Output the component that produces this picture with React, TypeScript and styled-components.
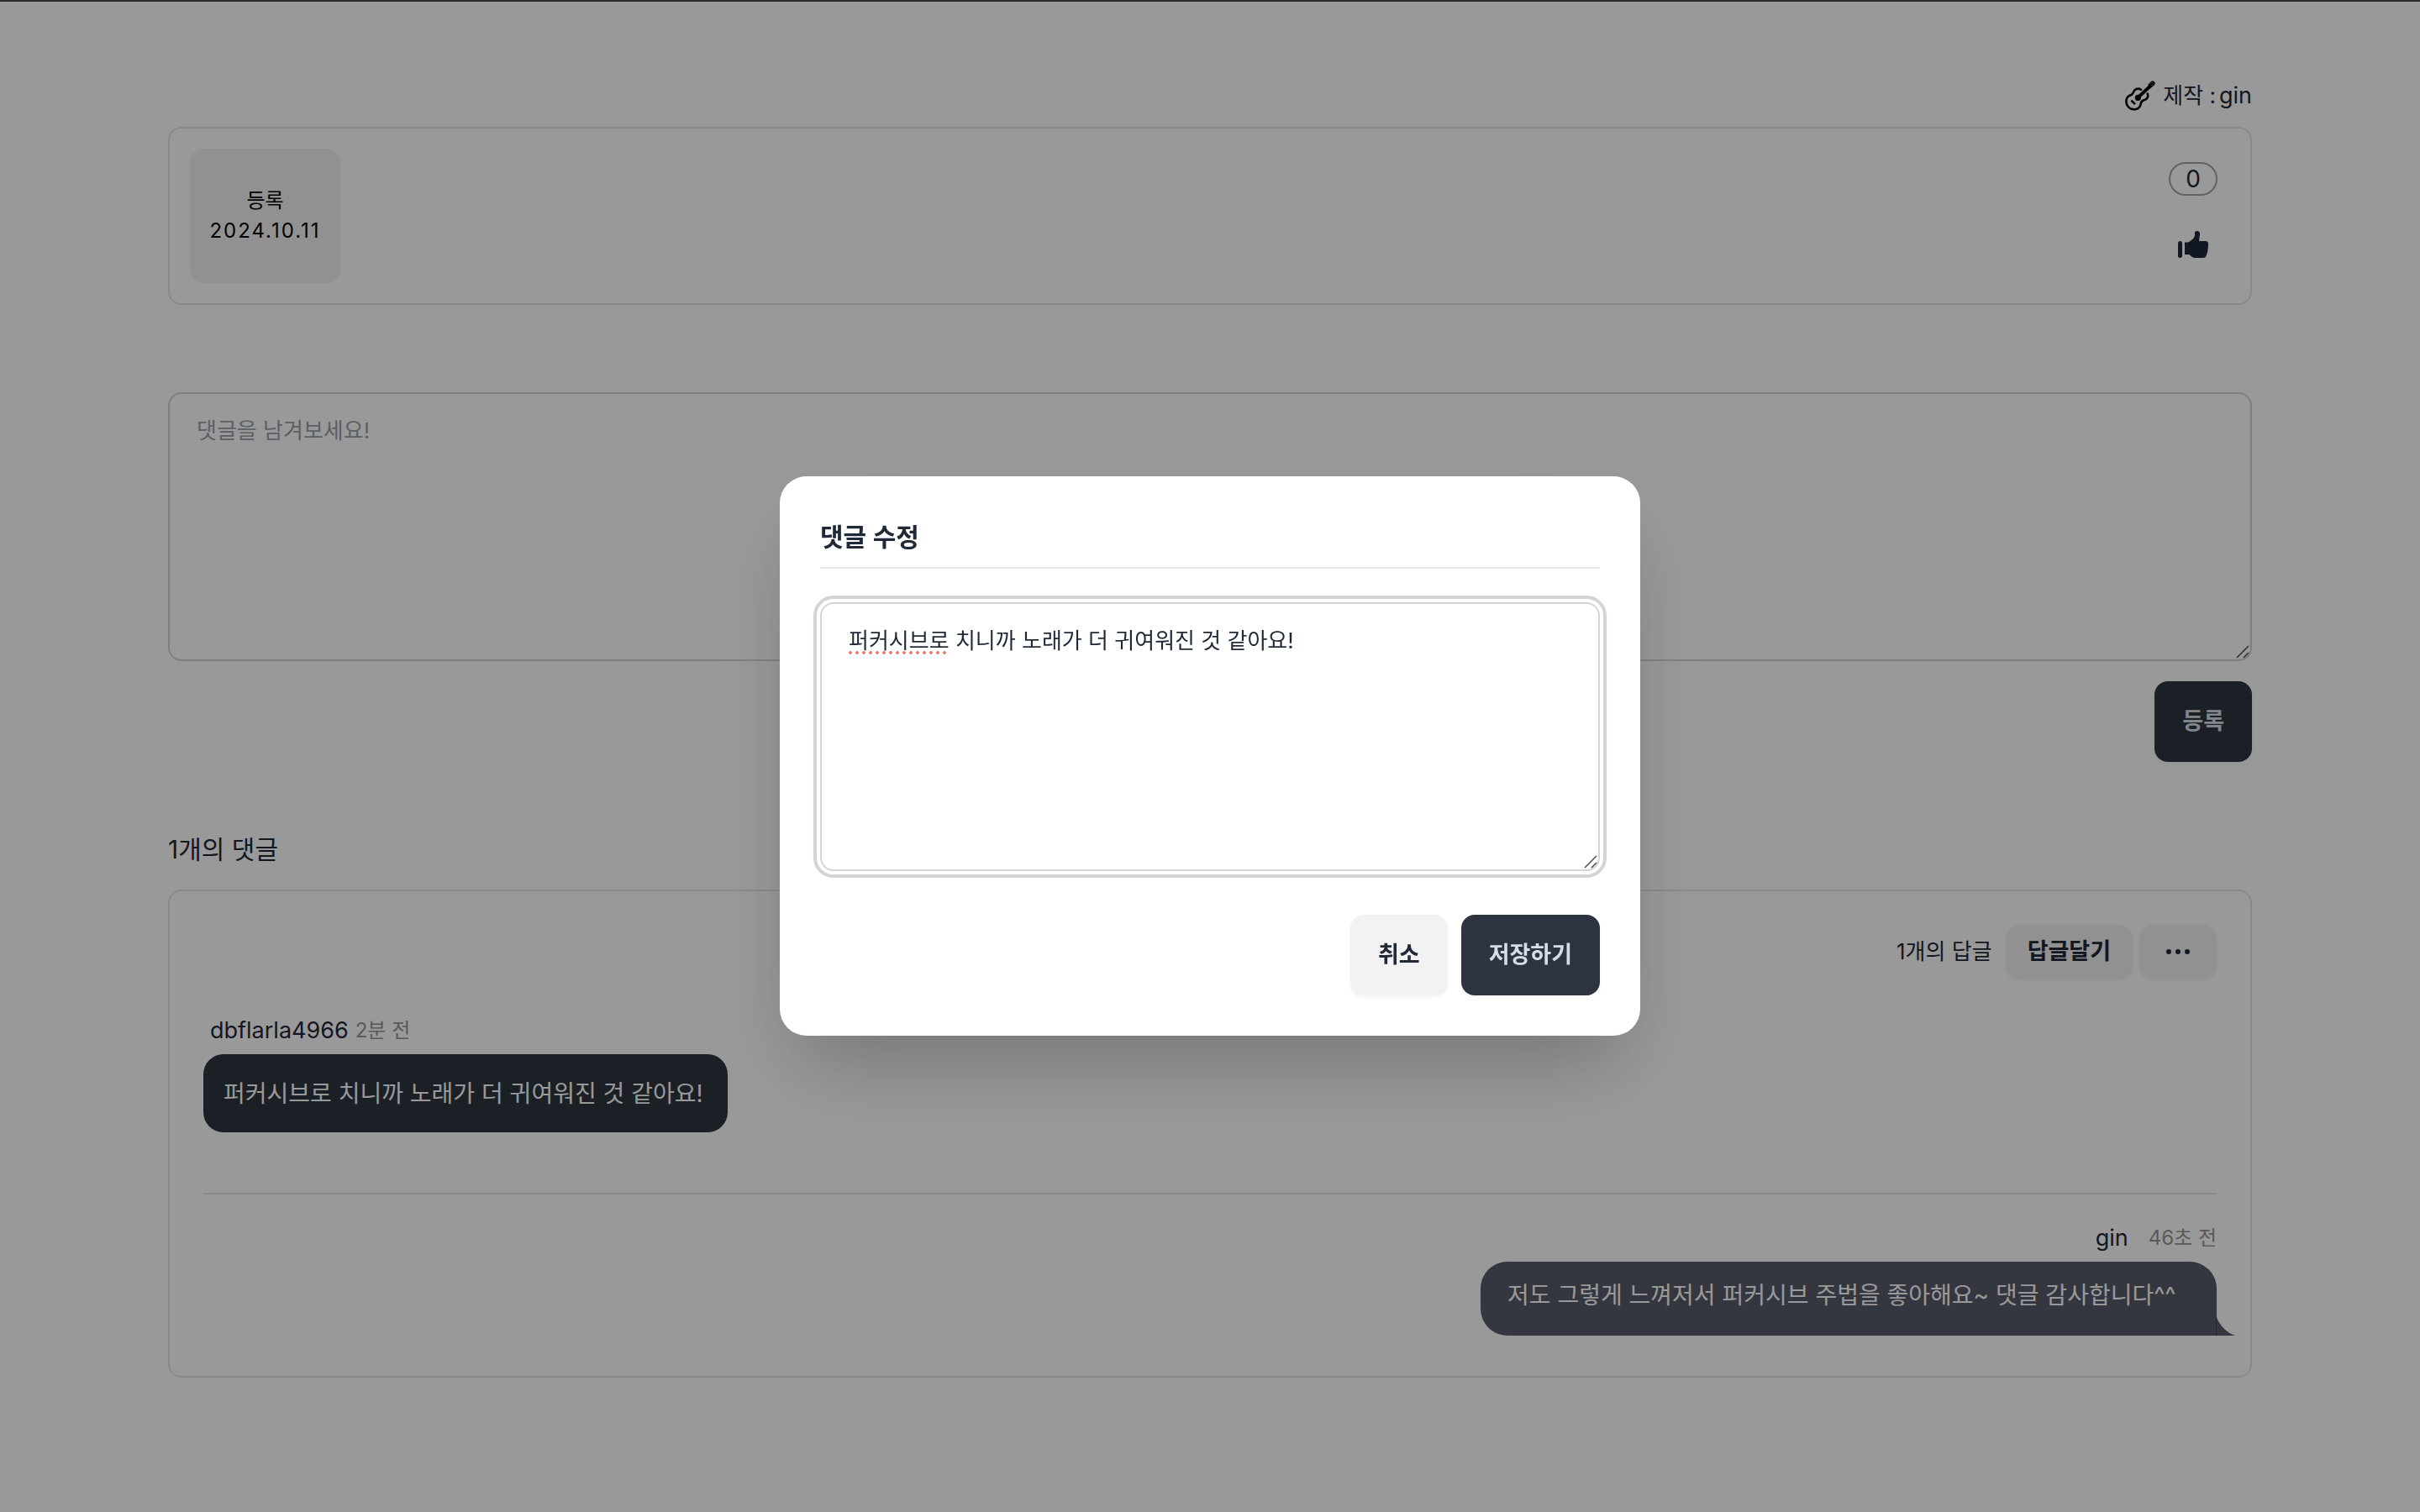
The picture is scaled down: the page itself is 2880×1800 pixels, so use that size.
import React from 'react';
import styled, { createGlobalStyle, css } from 'styled-components';

const ink = '#1f2937';
const neutral = '#2d3440';
const line = '#e5e5e5';
const fieldLine = '#d2d4d7';
const soft = '#f2f2f2';

const GlobalStyle = createGlobalStyle`
  *, *::before, *::after { box-sizing: border-box; }
  body {
    margin: 0;
    background: #fff;
    color: ${ink};
    font: 400 26px/40px Inter, "Noto Sans CJK KR", sans-serif;
  }
  h1, h2, p { margin: 0; font-weight: inherit; }
  button, textarea { font: inherit; color: inherit; }
`;

const Page = styled.main`
  display: flex;
  flex-direction: column;
  padding: 0 200px 160px;
  min-height: 100vh;
  border-top: 2px solid #444;
`;

const Maker = styled.div`
  display: flex;
  justify-content: flex-end;
  align-items: center;
  gap: 4px;
  padding: 92px 0 17px;
`;

const GuitarIcon = styled.svg`
  margin-right: 5px;
`;

const Name = styled.span`
  font-size: 27px;
`;

const Card = styled.section`
  display: flex;
  border: 2px solid ${line};
  border-radius: 16px;
`;

const SummaryCard = styled(Card)`
  justify-content: space-between;
  padding: 24px;
`;

const DateBox = styled.div`
  display: flex;
  flex-direction: column;
  justify-content: center;
  align-items: center;
  min-width: 179px;
  height: 160px;
  border-radius: 16px;
  background: ${soft};
  color: #000;
  font-size: 24px;
  line-height: 36px;
`;

const DateText = styled.time`
  letter-spacing: 2px;
`;

const Likes = styled.div`
  display: flex;
  flex-direction: column;
  align-items: center;
  gap: 42px;
  padding: 16px 15px;
`;

const LikeCount = styled.span`
  width: 58px;
  height: 40px;
  border: 2px solid #a6a6a6;
  border-radius: 20px;
  font-size: 28px;
  line-height: 36px;
  text-align: center;
`;

const IconButton = styled.button`
  display: flex;
  padding: 0;
  border: 0;
  background: none;
`;

const Form = styled.form`
  display: flex;
  flex-direction: column;
  align-items: flex-end;
  gap: 24px;
  margin-top: 104px;
`;

const FieldWrap = styled.div`
  position: relative;
  display: flex;
  width: 100%;
`;

const TextArea = styled.textarea<{ $focused?: boolean }>`
  flex: 1;
  height: 320px;
  padding: 16px 32px;
  border: 2px solid ${fieldLine};
  border-radius: 16px;
  background: #fff;
  line-height: 56px;
  resize: none;
  outline: ${({ $focused }) => ($focused ? `4px solid ${fieldLine}` : 'none')};
  outline-offset: 4px;
  &::placeholder { color: #9ca0ab; opacity: 1; }
`;

const Grip = styled.svg`
  position: absolute;
  right: 3px;
  bottom: 3px;
`;

const Misspelling = styled.span`
  position: absolute;
  left: 34px;
  top: 58px;
  width: 120px;
  height: 4px;
  background: radial-gradient(circle at 2px 2px, #f27d72 2px, transparent 2px) 0 0 / 8px 4px;
`;

const Button = styled.button<{ $dark?: boolean; $small?: boolean }>`
  display: flex;
  justify-content: center;
  align-items: center;
  height: 96px;
  padding: 0 33px;
  border: 0;
  border-radius: 16px;
  background: ${({ $dark }) => ($dark ? neutral : soft)};
  color: ${({ $dark }) => ($dark ? '#d7dde4' : ink)};
  font-size: 27px;
  font-weight: 600;
  box-shadow: 0 2px 4px rgba(0, 0, 0, 0.05);
  ${({ $small }) => $small && css`
    height: 64px;
    padding: 0 26px;
  `}
`;

const Heading = styled.h1`
  margin-top: 80px;
  font-size: 30px;
  line-height: 48px;
`;

const Thread = styled(Card)`
  flex-direction: column;
  margin-top: 24px;
  padding: 40px 40px 48px;
`;

const Toolbar = styled.div`
  display: flex;
  justify-content: flex-end;
  align-items: center;
  gap: 8px;
`;

const ReplyCount = styled.span`
  margin-right: 8px;
`;

const Author = styled.div<{ $mine?: boolean }>`
  display: flex;
  align-items: center;
  justify-content: ${({ $mine }) => ($mine ? 'flex-end' : 'flex-start')};
  gap: ${({ $mine }) => ($mine ? 24 : 8)}px;
  margin-top: ${({ $mine }) => ($mine ? 32 : 42)}px;
  padding-left: 8px;
`;

const Time = styled.time`
  color: #969696;
  font-size: 24px;
`;

const Bubble = styled.p`
  align-self: flex-start;
  min-width: 624px;
  margin-top: 8px;
  padding: 25px 24px 23px;
  border-radius: 24px;
  background: ${neutral};
  color: #fff;
  font-size: 28px;
  line-height: 45px;
`;

const Divider = styled.hr`
  width: 100%;
  height: 2px;
  margin: 72px 0 0;
  border: 0;
  background: ${line};
`;

const ReplyBubble = styled.p`
  position: relative;
  align-self: flex-end;
  min-width: 876px;
  min-height: 88px;
  margin-top: 8px;
  padding: 16px 32px;
  border-radius: 32px 32px 0 32px;
  background: #585c69;
  color: #fff;
  font-size: 28px;
  line-height: 48px;
`;

const Tail = styled.svg`
  position: absolute;
  left: calc(100% - 1px);
  bottom: 0;
`;

const Backdrop = styled.div`
  position: fixed;
  inset: 0;
  display: grid;
  place-items: center;
  background: rgba(0, 0, 0, 0.4);
`;

const Modal = styled.form`
  display: flex;
  flex-direction: column;
  width: 1024px;
  max-width: 90vw;
  padding: 48px;
  border-radius: 32px;
  background: #fff;
  box-shadow: 0 50px 100px -24px rgba(0, 0, 0, 0.25);
`;

const ModalTitle = styled.h2`
  margin-bottom: 40px;
  padding-bottom: 12px;
  border-bottom: 2px solid #e5e6e9;
  font-size: 30px;
  font-weight: 600;
  line-height: 48px;
`;

const Actions = styled.div`
  display: flex;
  justify-content: flex-end;
  gap: 16px;
  margin-top: 52px;
`;

function Field(props: React.ComponentProps<typeof TextArea> & { children?: React.ReactNode }) {
  const { children, ...rest } = props;
  return (
    <FieldWrap>
      <TextArea spellCheck={false} {...rest} />
      {children}
      <Grip width="16" height="16" viewBox="0 0 16 16" stroke="#555" strokeWidth="1.6" aria-hidden="true">
        <path d="M1 15 15 1M9 15l6-6" />
      </Grip>
    </FieldWrap>
  );
}

function Guitar() {
  return (
    <GuitarIcon width="36" height="36" viewBox="0 0 36 36" fill="none" stroke="#000" strokeLinecap="round" aria-hidden="true">
      <path
        strokeWidth="2.6"
        d="M19 10.8C15 8 10.8 10.5 9.8 14c-.6 2-1.6 2.8-3.8 3.5C1.600 19 .5 24 2.200 28.500 4 33 8.500 34.800 13 34c4.300-1 5.500-4 5.800-6.800.3-2.600 1.700-3.500 4.200-4.200 4-1.400 5-4.500 3.700-7.400"
      />
      <circle cx="15.3" cy="20.3" r="3.6" fill="#000" stroke="none" />
      <path strokeWidth="3.8" d="M15.5 20 30 6.500" />
      <path strokeWidth="5.6" d="m30.400 5.600 2.400-2.400" />
      <path stroke="#fff" strokeWidth="1" d="M30.200 3.800h.01M32.200 2.200h.01M32.200 5.600h.01M34 3.800h.01" />
      <path strokeWidth="2.6" d="m8.200 24.400 3 2.800" />
    </GuitarIcon>
  );
}

function ThumbUp() {
  return (
    <svg width="36" height="32" viewBox="0 0 36 32" fill="currentColor" aria-hidden="true">
      <rect y="12" width="5" height="20" rx="2.5" />
      <path d="M8 13.500h4c4-2 7.500-5 8-8.500V2c0-1.300 1-2 2.500-2C25 0 26.500 2 26 4.500L25 12h8c2 0 3 1.300 3 3.500 0 4.500-.5 8.500-2 13-.7 2.500-2 3.500-4 3.500h-9.500c-2.500 0-4.500-1.500-6.500-3.500-.5-.4-1-.5-2-.5H8Z" />
    </svg>
  );
}

export default function App() {
  const text = '퍼커시브로 치니까 노래가 더 귀여워진 것 같아요!';
  return (
    <>
      <GlobalStyle />
      <Page>
        <Maker>
          <Guitar />
          <span>제작 :</span>
          <Name>gin</Name>
        </Maker>
        <SummaryCard>
          <DateBox>
            <span>등록</span>
            <DateText>2024.10.11</DateText>
          </DateBox>
          <Likes>
            <LikeCount>0</LikeCount>
            <IconButton type="button" aria-label="좋아요">
              <ThumbUp />
            </IconButton>
          </Likes>
        </SummaryCard>
        <Form>
          <Field placeholder="댓글을 남겨보세요!" aria-label="댓글" />
          <Button type="button" $dark>등록</Button>
        </Form>
        <Heading>1개의 댓글</Heading>
        <Thread>
          <Toolbar>
            <ReplyCount>1개의 답글</ReplyCount>
            <Button type="button" $small>답글달기</Button>
            <Button type="button" $small aria-label="더보기">
              <svg width="40" height="8" viewBox="0 0 40 8" fill="currentColor" aria-hidden="true">
                <circle cx="9" cy="4" r="3" />
                <circle cx="20" cy="4" r="3" />
                <circle cx="31" cy="4" r="3" />
              </svg>
            </Button>
          </Toolbar>
          <Author>
            <Name>dbflarla4966</Name>
            <Time>2분 전</Time>
          </Author>
          <Bubble>{text}</Bubble>
          <Divider />
          <Author $mine>
            <Name>gin</Name>
            <Time>46초 전</Time>
          </Author>
          <ReplyBubble>
            저도 그렇게 느껴저서 퍼커시브 주법을 좋아해요~ 댓글 감사합니다^^
            <Tail width="23" height="22" viewBox="0 0 23 22" aria-hidden="true">
              <path d="M1 0C4 9 13 19 23 22H1Z" fill="#585c69" />
              <path d="M0 2h1v20H0Z" fill="#3b3e47" />
            </Tail>
          </ReplyBubble>
        </Thread>
      </Page>
      <Backdrop>
        <Modal role="dialog" aria-labelledby="edit-title">
          <ModalTitle id="edit-title">댓글 수정</ModalTitle>
          <Field $focused defaultValue={text} aria-labelledby="edit-title">
            <Misspelling />
          </Field>
          <Actions>
            <Button type="button">취소</Button>
            <Button type="button" $dark>저장하기</Button>
          </Actions>
        </Modal>
      </Backdrop>
    </>
  );
}
